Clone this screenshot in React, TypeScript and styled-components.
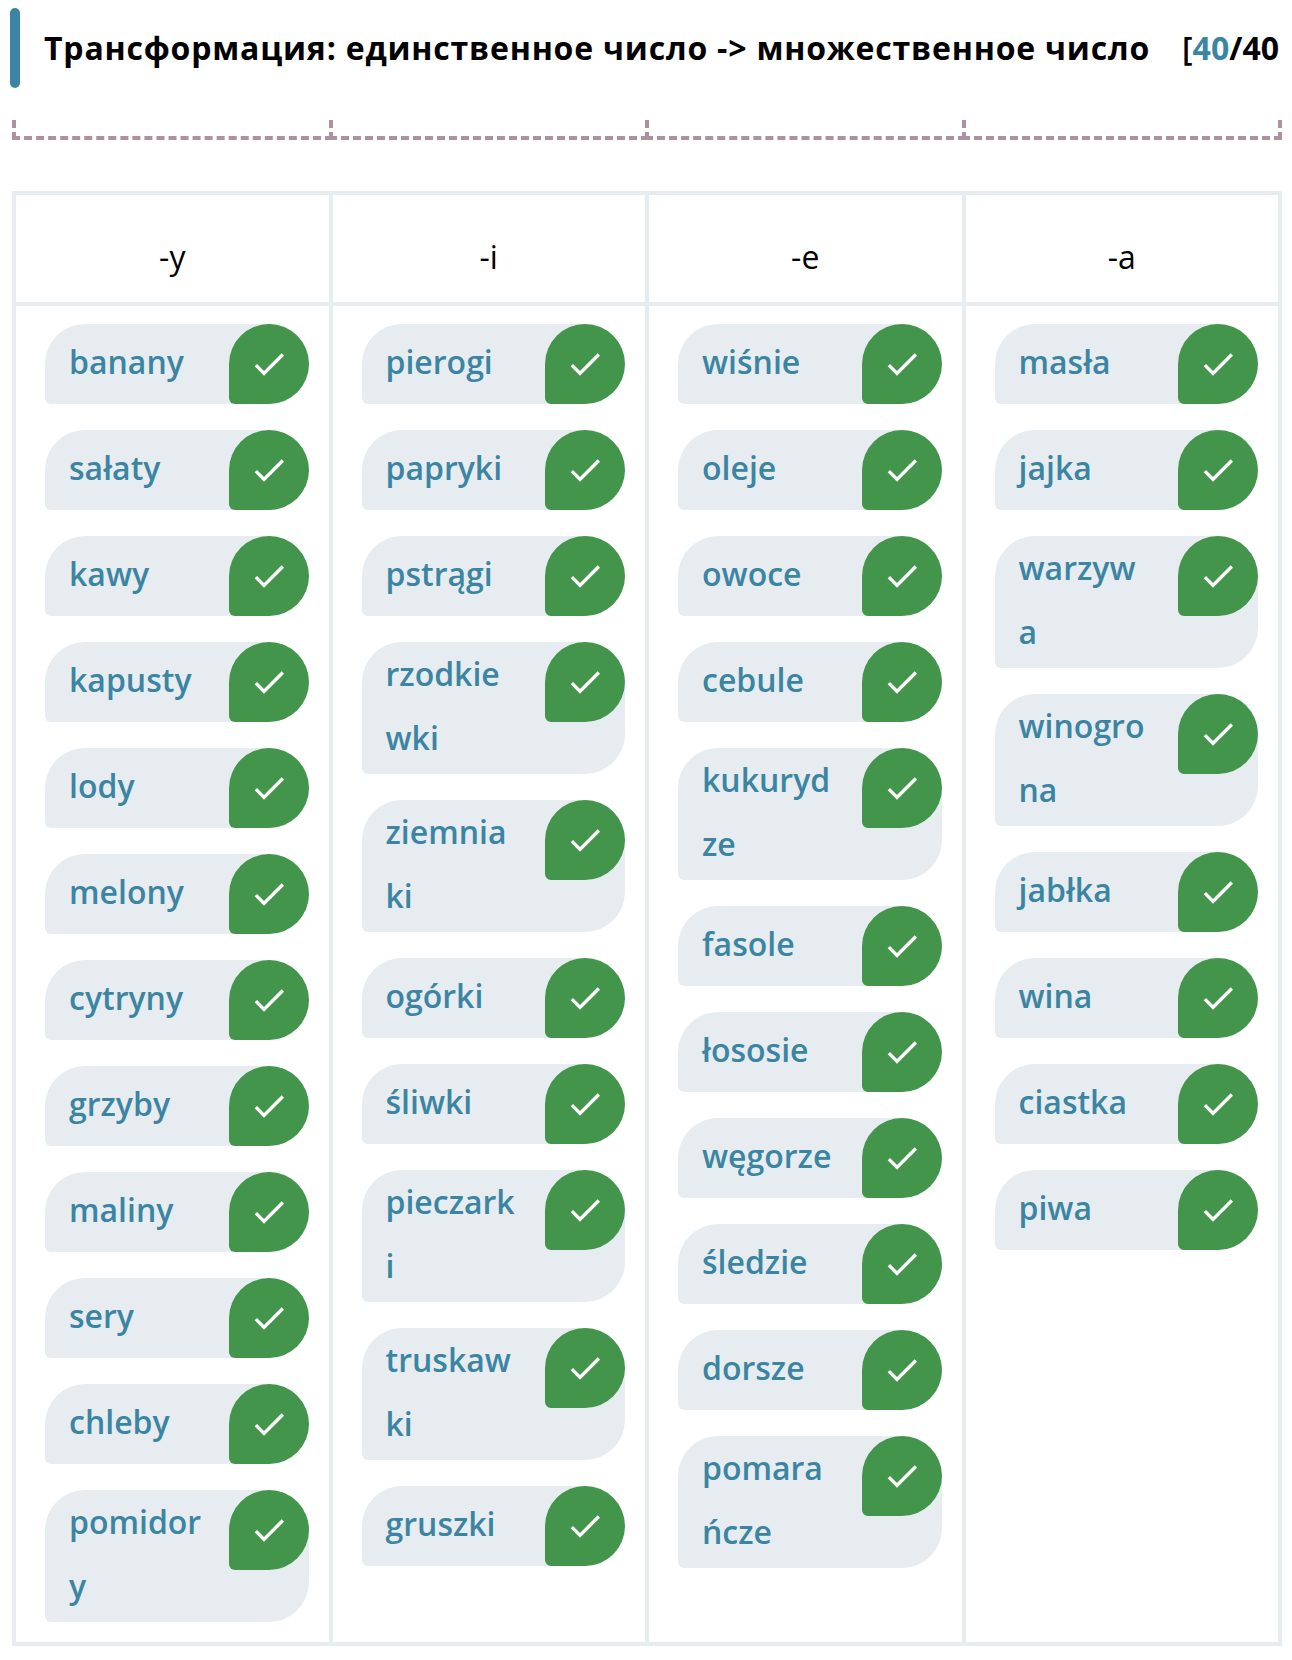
import React from "react";
import styled, { createGlobalStyle } from "styled-components";

const color = {
  ink: "#000000",
  accent: "#3b85a3",
  panel: "#e7ecf0",
  success: "#43954b",
  bracket: "#b08fa0",
};

const columns = [
  {
    ending: "-y",
    words: ["banany", "sałaty", "kawy", "kapusty", "lody", "melony", "cytryny", "grzyby", "maliny", "sery", "chleby", "pomidory"],
  },
  {
    ending: "-i",
    words: ["pierogi", "papryki", "pstrągi", "rzodkiewki", "ziemniaki", "ogórki", "śliwki", "pieczarki", "truskawki", "gruszki"],
  },
  {
    ending: "-e",
    words: ["wiśnie", "oleje", "owoce", "cebule", "kukurydze", "fasole", "łososie", "węgorze", "śledzie", "dorsze", "pomarańcze"],
  },
  {
    ending: "-a",
    words: ["masła", "jajka", "warzywa", "winogrona", "jabłka", "wina", "ciastka", "piwa"],
  },
];

const GlobalStyle = createGlobalStyle`
  *, *::before, *::after {
    box-sizing: border-box;
  }
  body {
    margin: 0;
    background: #ffffff;
    color: ${color.ink};
    font-family: "Open Sans", "Noto Sans", sans-serif;
    font-size: 32px;
    line-height: 64px;
  }
`;

const Page = styled.main`
  padding: 8px 10px 14px;
`;

const Header = styled.header`
  display: flex;
  align-items: center;
  justify-content: space-between;
  min-height: 80px;
  padding-right: 3px;
`;

const Heading = styled.div`
  display: flex;
  align-items: center;
  gap: 24px;
`;

const Marker = styled.span`
  flex: none;
  width: 10px;
  height: 80px;
  border-radius: 5px;
  background: ${color.accent};
`;

const Title = styled.h1`
  margin: 0;
  font-size: 32px;
  font-weight: 700;
  letter-spacing: 0.025em;
`;

const Counter = styled.output`
  flex: none;
  font-weight: 600;
`;

const Count = styled.strong<{ $done?: boolean }>`
  color: ${({ $done }) => ($done ? color.accent : color.ink)};
  font-weight: 700;
`;

const Brackets = styled.div`
  display: flex;
  margin: 32px 0 51px;
  padding: 0 0 0 2px;
`;

const Bracket = styled.span`
  flex: 1;
  height: 20px;
  border: 4px dashed ${color.bracket};
  border-top: 0;

  & + & {
    margin-left: -4px;
  }
`;

const Board = styled.div`
  padding: 0 0 0 2px;
`;

const Table = styled.table`
  width: 100%;
  table-layout: fixed;
  border-collapse: collapse;
`;

const Ending = styled.th`
  padding: 30px 0 13px;
  border: 4px solid ${color.panel};
  font-weight: 500;
  text-align: center;
`;

const Cell = styled.td`
  padding: 18px 20px 20px 29px;
  border: 4px solid ${color.panel};
  vertical-align: top;
`;

const WordList = styled.ul`
  display: flex;
  flex-direction: column;
  gap: 26px;
  margin: 0;
  padding: 0;
  list-style: none;
`;

const WordItem = styled.li`
  display: flex;
  min-height: 80px;
  border-radius: 40px 40px 40px 6px;
  background: ${color.panel};
`;

const Word = styled.span`
  flex: 1;
  min-width: 0;
  align-self: center;
  padding: 0 26px 4px 24px;
  color: ${color.accent};
  font-weight: 600;
  word-break: break-all;
`;

const Badge = styled.span`
  display: flex;
  flex: none;
  align-items: center;
  justify-content: center;
  width: 80px;
  height: 80px;
  border-radius: 40px 40px 40px 6px;
  background: ${color.success};
`;

function CheckBadge() {
  return (
    <Badge>
      <svg width="40" height="40" viewBox="0 0 24 24" fill="#ffffff" aria-hidden="true">
        <path d="M9 16.17 4.83 12l-1.42 1.41L9 19 21 7l-1.41-1.41z" />
      </svg>
    </Badge>
  );
}

export default function App() {
  return (
    <>
      <GlobalStyle />
      <Page>
        <Header>
          <Heading>
            <Marker />
            <Title>{"Трансформация: единственное число -> множественное число"}</Title>
          </Heading>
          <Counter>
            [<Count $done>40</Count>
            <Count>/40</Count>
          </Counter>
        </Header>
        <Brackets>
          {columns.map((column) => (
            <Bracket key={column.ending} />
          ))}
        </Brackets>
        <Board>
          <Table>
            <thead>
              <tr>
                {columns.map((column) => (
                  <Ending key={column.ending} scope="col">
                    {column.ending}
                  </Ending>
                ))}
              </tr>
            </thead>
            <tbody>
              <tr>
                {columns.map((column) => (
                  <Cell key={column.ending}>
                    <WordList>
                      {column.words.map((word) => (
                        <WordItem key={word}>
                          <Word>{word}</Word>
                          <CheckBadge />
                        </WordItem>
                      ))}
                    </WordList>
                  </Cell>
                ))}
              </tr>
            </tbody>
          </Table>
        </Board>
      </Page>
    </>
  );
}
